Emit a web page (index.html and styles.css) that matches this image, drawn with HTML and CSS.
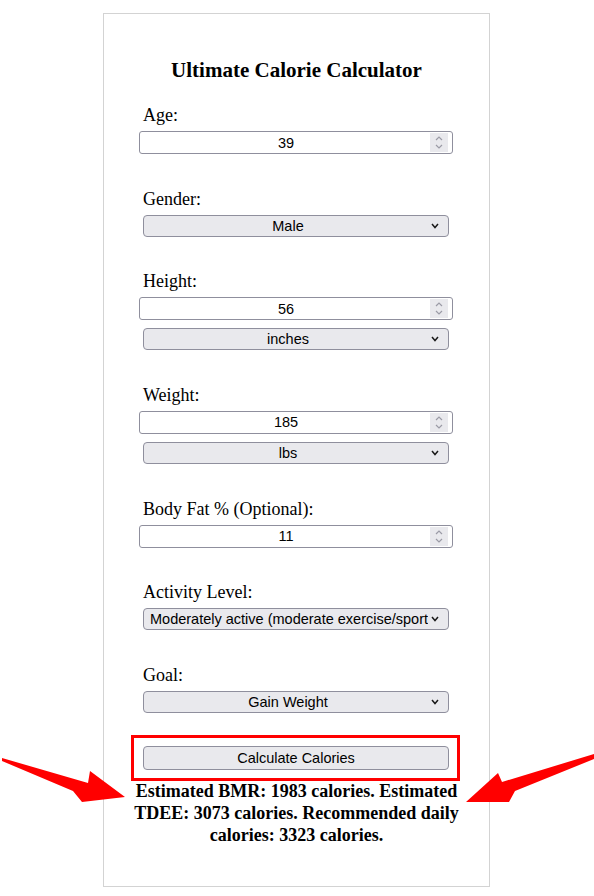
FILE: index.html
```html
<!DOCTYPE html>
<html lang="en">
<head>
<meta charset="utf-8">
<title>Ultimate Calorie Calculator</title>
<link rel="stylesheet" href="styles.css">
</head>
<body>
<div class="card">
  <h3 class="title">Ultimate Calorie Calculator</h3>
  <div class="form">
    <div class="field">
      <label for="age">Age:</label>
      <div class="num"><input type="number" id="age" value="39"><span class="spin"><svg width="18" height="19" viewBox="0 0 18 19"><polyline points="6,7 9,4 12,7"/><polyline points="6,12 9,15 12,12"/></svg></span></div>
    </div>
    <div class="field">
      <label for="gender">Gender:</label>
      <div class="sel"><select id="gender"><option>Male</option><option>Female</option></select><svg class="chev" width="8" height="6" viewBox="0 0 8 6"><polyline points="1,1 4,4.5 7,1"/></svg></div>
    </div>
    <div class="field">
      <label for="height">Height:</label>
      <div class="num"><input type="number" id="height" value="56"><span class="spin"><svg width="18" height="19" viewBox="0 0 18 19"><polyline points="6,7 9,4 12,7"/><polyline points="6,12 9,15 12,12"/></svg></span></div>
      <div class="sel gap"><select id="hunit"><option>inches</option><option>cm</option></select><svg class="chev" width="8" height="6" viewBox="0 0 8 6"><polyline points="1,1 4,4.5 7,1"/></svg></div>
    </div>
    <div class="field">
      <label for="weight">Weight:</label>
      <div class="num"><input type="number" id="weight" value="185"><span class="spin"><svg width="18" height="19" viewBox="0 0 18 19"><polyline points="6,7 9,4 12,7"/><polyline points="6,12 9,15 12,12"/></svg></span></div>
      <div class="sel gap"><select id="wunit"><option>lbs</option><option>kg</option></select><svg class="chev" width="8" height="6" viewBox="0 0 8 6"><polyline points="1,1 4,4.5 7,1"/></svg></div>
    </div>
    <div class="field">
      <label for="fat">Body Fat % (Optional):</label>
      <div class="num"><input type="number" id="fat" value="11"><span class="spin"><svg width="18" height="19" viewBox="0 0 18 19"><polyline points="6,7 9,4 12,7"/><polyline points="6,12 9,15 12,12"/></svg></span></div>
    </div>
    <div class="field">
      <label for="activity">Activity Level:</label>
      <div class="sel"><select id="activity" class="left"><option>Moderately active (moderate exercise/sports 3-5 days/week)</option></select><svg class="chev" width="8" height="6" viewBox="0 0 8 6"><polyline points="1,1 4,4.5 7,1"/></svg></div>
    </div>
    <div class="field last">
      <label for="goal">Goal:</label>
      <div class="sel"><select id="goal"><option>Gain Weight</option><option>Maintain Weight</option><option>Lose Weight</option></select><svg class="chev" width="8" height="6" viewBox="0 0 8 6"><polyline points="1,1 4,4.5 7,1"/></svg></div>
    </div>
    <div class="action"><button type="button">Calculate Calories</button></div>
  </div>
  <div class="result">Estimated BMR: 1983 calories. Estimated TDEE: 3073 calories. Recommended daily calories: 3323 calories.</div>
</div>
<svg class="arrows" width="594" height="896" viewBox="0 0 594 896">
  <polygon points="2,758 88,783 90,771 125,797 82,802 73,791 2,761"/>
  <polygon points="594,754 502,782 498,773 466,802 509,802 515,791 594,759"/>
</svg>
</body>
</html>
```
FILE: styles.css
```css
html, body {
  margin: 0;
  padding: 0;
  background: #fff;
}
body {
  font-family: "Liberation Serif", "Times New Roman", serif;
  color: #000;
}
.card {
  box-sizing: border-box;
  width: 387px;
  height: 874px;
  margin: 13px 0 0 103px;
  border: 1px solid #d3d3d3;
  padding-top: 44px;
}
.title {
  margin: 0;
  font-size: 21px;
  line-height: 24px;
  font-weight: bold;
  text-align: center;
}
.form {
  margin-top: 23px;
  padding: 0 40px 0 39px;
}
.field {
  margin-bottom: 34.67px;
}
.field.last {
  margin-bottom: 33px;
}
.field label {
  display: block;
  height: 20px;
  line-height: 20px;
  margin-bottom: 6px;
  font-size: 18px;
}
.num {
  position: relative;
  height: 23px;
  margin: 0 -4px;
}
.num input {
  box-sizing: border-box;
  width: 100%;
  height: 23px;
  margin: 0;
  padding: 0 22px 0 2px;
  border: 1px solid #8f8f9d;
  border-radius: 3px;
  background: #fff;
  color: #000;
  font-family: "Liberation Sans", Arial, sans-serif;
  font-size: 14.5px;
  text-align: center;
  appearance: textfield;
  -moz-appearance: textfield;
  outline: none;
}
.num input::-webkit-inner-spin-button,
.num input::-webkit-outer-spin-button {
  -webkit-appearance: none;
  margin: 0;
}
.spin {
  position: absolute;
  right: 5px;
  top: 2px;
  width: 18px;
  height: 19px;
  background: #e9e9ed;
  pointer-events: none;
}
.spin svg {
  display: block;
}
.spin polyline {
  fill: none;
  stroke: #9b9ba6;
  stroke-width: 1.2;
}
.sel {
  position: relative;
  height: 22px;
}
.sel.gap {
  margin-top: 8px;
}
.sel select {
  box-sizing: border-box;
  width: 100%;
  height: 22px;
  margin: 0;
  padding: 0 20px 0 4px;
  border: 1px solid #8f8f9d;
  border-radius: 4px;
  background: #e9e9ed;
  color: #000;
  font-family: "Liberation Sans", Arial, sans-serif;
  font-size: 14.5px;
  text-align: center;
  text-align-last: center;
  appearance: none;
  -webkit-appearance: none;
  outline: none;
}
.sel select.left {
  text-align: left;
  text-align-last: left;
  padding-left: 6px;
}
.chev {
  position: absolute;
  right: 10px;
  top: 8px;
  pointer-events: none;
}
.chev polyline {
  fill: none;
  stroke: #1a1a1a;
  stroke-width: 1.5;
}
.action {
  position: relative;
}
.action button {
  box-sizing: border-box;
  display: block;
  width: 100%;
  height: 24px;
  margin: 0;
  border: 1px solid #8f8f9d;
  border-radius: 4px;
  background: #e9e9ed;
  color: #000;
  font-family: "Liberation Sans", Arial, sans-serif;
  font-size: 14.5px;
}
.action::after {
  content: "";
  position: absolute;
  left: -12px;
  right: -11px;
  top: -11px;
  bottom: -11px;
  border: 3px solid #ff0000;
  pointer-events: none;
}
.result {
  margin: 10px 20px 0 20px;
  font-size: 18px;
  line-height: 22px;
  font-weight: bold;
  text-align: center;
}
.arrows {
  position: absolute;
  left: 0;
  top: 0;
  pointer-events: none;
}
.arrows polygon {
  fill: #ff0000;
}
```
